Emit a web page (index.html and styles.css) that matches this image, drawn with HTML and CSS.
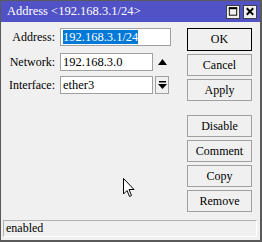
FILE: index.html
```html
<!DOCTYPE html>
<html>
<head>
<meta charset="utf-8">
<link rel="stylesheet" href="styles.css">
</head>
<body>
<div class="window">
  <div class="titlebar">
    <span class="title">Address &lt;192.168.3.1/24&gt;</span>
    <div class="tbtns">
      <span class="tbtn"><svg width="13" height="13" viewBox="0 0 13 13"><rect x="2.5" y="2.5" width="8" height="8" fill="none" stroke="#000" stroke-width="1"/><rect x="2" y="2" width="9" height="2" fill="#000"/></svg></span>
      <span class="tbtn"><svg width="13" height="13" viewBox="0 0 13 13"><path d="M3 3 L10 10 M10 3 L3 10" stroke="#000" stroke-width="2"/></svg></span>
    </div>
  </div>
  <div class="main">
    <div class="form">
      <div class="row">
        <label>Address:</label>
        <div class="input long"><span class="sel">192.168.3.1/24</span></div>
      </div>
      <div class="row">
        <label>Network:</label>
        <div class="input">192.168.3.0</div>
        <span class="up"><svg width="9" height="6" viewBox="0 0 9 6"><path d="M0 6 L4.5 0 L9 6 Z" fill="#000"/></svg></span>
      </div>
      <div class="row">
        <label>Interface:</label>
        <div class="input">ether3</div>
        <span class="drop"><svg width="9" height="9" viewBox="0 0 9 9"><rect x="1" y="0" width="7" height="1.5" fill="#000"/><path d="M0 3 L9 3 L4.5 8 Z" fill="#000"/></svg></span>
      </div>
    </div>
    <div class="buttons">
      <div class="btn default">OK</div>
      <div class="btn">Cancel</div>
      <div class="btn">Apply</div>
      <div class="spacer"></div>
      <div class="btn">Disable</div>
      <div class="btn">Comment</div>
      <div class="btn">Copy</div>
      <div class="btn">Remove</div>
    </div>
  </div>
  <div class="status">enabled</div>
  <svg class="cursor" width="13" height="21" viewBox="0 0 13 21"><path d="M0.5 0.5 L0.5 16 L4 12.5 L6.5 18.5 L8.5 17.5 L6 11.5 L11 11.5 Z" fill="#fff" stroke="#000" stroke-width="1" stroke-linejoin="miter"/></svg>
</div>
</body>
</html>
```
FILE: styles.css
```css
html, body { margin: 0; padding: 0; }
body { font-family: "Liberation Serif", serif; font-size: 12px; color: #000; }
.window {
  position: relative;
  width: 262px; height: 242px; box-sizing: border-box;
  background: #f0f0f0;
  border: 1px solid #5a5a5a;
  border-right-width: 2px; border-bottom-width: 2px;
  display: flex; flex-direction: column;
}
.titlebar {
  height: 21px; background: #5052c6; color: #fff;
  display: flex; align-items: center; justify-content: space-between;
  padding: 0 3px 0 6px;
}
.title { font-size: 12.5px; }
.tbtns { display: flex; gap: 3px; }
.tbtn {
  width: 14px; height: 14px; box-sizing: border-box;
  background: #f0f0f0; border: 1px solid #404040;
  display: flex; align-items: center; justify-content: center;
}
.main { flex: 1; display: flex; justify-content: space-between; padding: 6px 8px 0 0; }
.form { display: flex; flex-direction: column; gap: 7px; }
.row { display: flex; align-items: center; height: 18px; }
.row:nth-child(3) { margin-top: -2px; }
label { width: 54px; text-align: right; margin-right: 5px; }
.input {
  width: 93px; height: 18px; box-sizing: border-box;
  background: #fff; border: 1px solid #a0a0a0;
  padding: 0 2px; line-height: 16px; font-size: 12.5px;
}
.input.long { width: 111px; }
.sel { background: #0078d7; color: #fff; }
.up { margin-left: 5px; display: flex; }
.drop {
  margin-left: 2px; width: 14px; height: 18px; box-sizing: border-box;
  border: 1px solid #a0a0a0; display: flex; align-items: center; justify-content: center;
}
.buttons { display: flex; flex-direction: column; gap: 3px; width: 65px; }
.btn {
  height: 22px; box-sizing: border-box; border: 1px solid #a0a0a0;
  background: #f0f0f0; text-align: center; line-height: 20px;
}
.btn.default { border-color: #000; height: 23px; }
.spacer { height: 8px; }
.status {
  margin: 0 3px 3px 2px; height: 17px; box-sizing: border-box;
  border: 1px solid #b0b0b0; border-right-color: #fff; border-bottom-color: #fff;
  padding-left: 2px; line-height: 15px;
}
.cursor { position: absolute; left: 122px; top: 177px; }
```
